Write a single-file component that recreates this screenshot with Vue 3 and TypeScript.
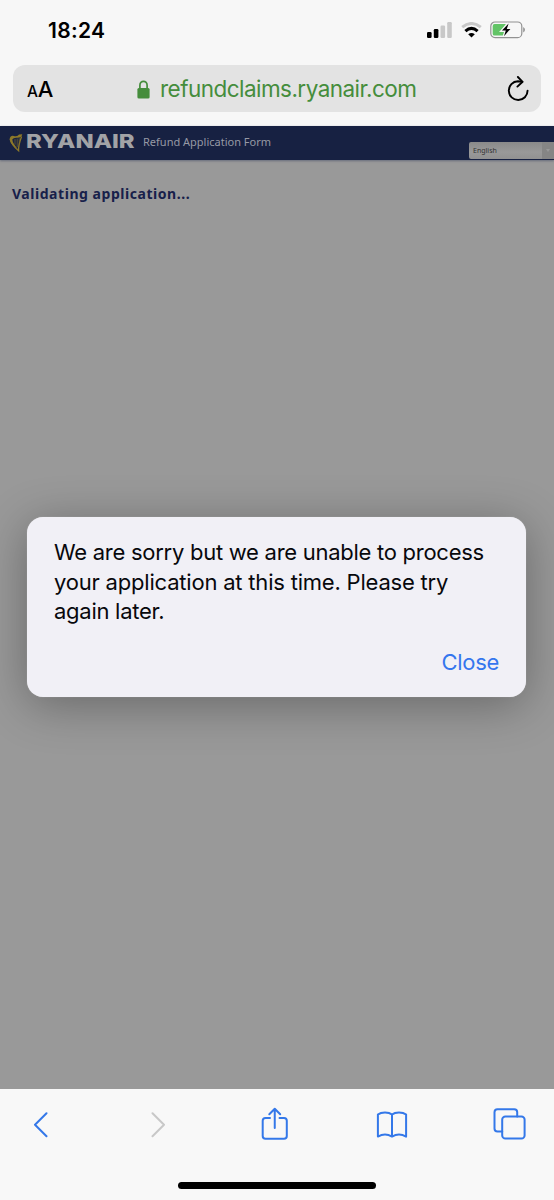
<script setup lang="ts">
const host = 'refundclaims.ryanair.com'
const lines: string[] = [
  'We are sorry but we are unable to process',
  'your application at this time. Please try',
  'again later.',
]
</script>

<template>
  <div class="phone">
    <header class="chrome">
      <div class="status">
        <span class="time">18:24</span>
        <div class="indicators">
          <svg class="signal" width="25" height="16" viewBox="0 0 25 16">
            <rect x="0" y="10" width="4.6" height="6" rx="1.2" fill="#000" />
            <rect x="6.8" y="7" width="4.6" height="9" rx="1.2" fill="#000" />
            <rect x="13.5" y="3.6" width="4.6" height="12.4" rx="1.2" fill="#c8c8c8" />
            <rect x="20.2" y="0" width="4.6" height="16" rx="1.2" fill="#c8c8c8" />
          </svg>
          <svg class="wifi" width="21" height="16" viewBox="0 0 21 16">
            <path d="M1.2 5.2Q10.5-2.2 19.8 5.2" fill="none" stroke="#c8c8c8" stroke-width="3" />
            <path d="M4.4 9.1Q10.5 3.8 16.6 9.1" fill="none" stroke="#000" stroke-width="3.1" />
            <path d="M7.2 12.2Q10.5 9.6 13.8 12.2L10.5 15.6Z" fill="#000" />
          </svg>
          <svg class="battery" width="35" height="18" viewBox="0 0 35 18">
            <rect x=".8" y="1" width="31" height="15.6" rx="4.2" fill="none" stroke="#929292" stroke-width="1.2" />
            <path d="M4.6 3H16L11 9.5H15L13.4 14.6H4.6Q2.7 14.6 2.7 12.7V4.9Q2.7 3 4.6 3Z" fill="#62c466" />
            <path d="M33.2 6Q35 7 35 8.8T33.2 11.6Z" fill="#929292" />
            <path d="M18.6 2.5L12 9.6H15.8L14 15.2L20.4 7.9H16.8Z" fill="#000" stroke="#f7f7f7" stroke-width="2.6" paint-order="stroke" />
          </svg>
        </div>
      </div>
      <div class="address">
        <span class="reader"><small>A</small>A</span>
        <svg class="lock" width="13" height="19" viewBox="0 0 13 19">
          <path d="M2.9 9V5.2a3.6 3.9 0 0 1 7.2 0V9" fill="none" stroke="#458d3c" stroke-width="1.7" />
          <rect x=".4" y="8" width="12.2" height="10.4" rx="1.5" fill="#458d3c" />
        </svg>
        <span class="host">{{ host }}</span>
        <svg class="reload" width="24" height="26" viewBox="0 0 24 26" fill="none" stroke="#000" stroke-width="1.9" stroke-linecap="round" stroke-linejoin="round">
          <path d="M17.2 5.9Q15.5 5.2 12.9 5.2A9.4 9.4 0 1 0 22.6 14.6" />
          <path d="M12.9 1L17.6 5.8L12.4 10.6" />
        </svg>
      </div>
    </header>

    <main class="page">
      <div class="banner">
        <svg class="harp" width="14" height="20" viewBox="0 0 14 20">
          <path d="M1.4 6.5Q2.4 12 9.6 17.8Q9.2 12.5 12.6 3.4" fill="none" stroke="#8d7929" stroke-width="1.3" />
          <path d="M.6 6.8Q.8 2.2 4.8 2.9Q8.6 3.8 10 1.6L13.3 1.2Q12.6 4.8 8.4 4.8Q4.4 4.4 3.3 6.6Q3.6 10.6 9.2 16.4Q2.4 12.8.6 6.8Z" fill="#8d7929" />
          <path d="M6 6V11.7M8.2 5.6V14M10.2 5.2V12" stroke="#77672d" stroke-width=".7" />
        </svg>
        <span class="brand">RYANAIR</span>
        <span class="form-name">Refund Application Form</span>
        <div class="language"><span>English</span><i><b></b></i></div>
      </div>
      <h1>Validating application...</h1>
      <section class="dialog" role="alertdialog">
        <p><span v-for="line in lines" :key="line">{{ line }}</span></p>
        <button type="button">Close</button>
      </section>
    </main>

    <footer class="toolbar">
      <nav>
        <svg width="16" height="26" viewBox="0 0 16 26"><path d="M13.5 1.3L2 12.8L13.5 24.3" /></svg>
        <svg class="disabled" width="16" height="26" viewBox="0 0 16 26"><path d="M2.5 1.3L14 12.8L2.5 24.3" /></svg>
        <svg width="28" height="34" viewBox="0 0 28 34"><path d="M9 11H4.5Q1.7 11 1.7 13.8V29Q1.7 31.8 4.5 31.8H23Q25.8 31.8 25.8 29V13.8Q25.8 11 23 11H18.5M13.75 21V2M8.3 7.2L13.75 1.8L19.2 7.2" /></svg>
        <svg width="32" height="28" viewBox="0 0 32 28"><path d="M16 3.6Q13.5 1.4 9 1.4T1.9 3.6V25.6Q5.5 23.6 9 23.6T16 25.6Q19.5 23.6 23 23.6T30.1 25.6V3.6Q27.5 1.4 23 1.4T16 3.6ZM16 3.6V25.6" /></svg>
        <svg width="33" height="32" viewBox="0 0 33 32"><rect x="9.2" y="8.4" width="22.4" height="22.2" rx="3.2" /><path d="M9.2 23.5H4.5Q1.5 23.5 1.5 20.5V4.3Q1.5 1.3 4.5 1.3H21.2Q24.2 1.3 24.2 4.3V8.4" /></svg>
      </nav>
      <div class="home"></div>
    </footer>
  </div>
</template>

<style>
body {
  margin: 0;
}
</style>

<style scoped>
.phone {
  width: 554px;
  height: 1200px;
  display: flex;
  flex-direction: column;
  overflow: hidden;
  background: #f8f8f8;
  font-family: Inter, "Liberation Sans", sans-serif;
  color: #000;
}
.chrome {
  height: 126px;
  box-sizing: border-box;
  background: #f7f7f7;
}
.status {
  height: 65px;
  box-sizing: border-box;
  padding: 18px 29px 0 48px;
  display: flex;
  justify-content: space-between;
}
.time {
  font-size: 21px;
  line-height: 26px;
  font-weight: 600;
  letter-spacing: 0.3px;
}
.indicators {
  display: flex;
  align-items: flex-start;
  padding-top: 4px;
}
.wifi {
  margin-left: 9px;
}
.battery {
  margin-left: 8px;
  margin-top: -1px;
}
.address {
  height: 47px;
  margin: 0 13px;
  padding: 0 12px 0 14px;
  box-sizing: border-box;
  display: flex;
  align-items: center;
  background: #e3e3e3;
  border-radius: 12px;
}
.reader {
  width: 109.5px;
  padding-top: 4px;
  font-size: 22px;
  line-height: 28px;
  font-weight: 450;
  letter-spacing: -0.2px;
}
.reader small {
  font-size: 15.5px;
  font-weight: 500;
}
.lock {
  margin-top: 1px;
}
.host {
  margin-left: 10.5px;
  color: #458d3c;
  font-size: 22.5px;
  line-height: 28px;
  letter-spacing: -0.54px;
}
.reload {
  margin-left: auto;
}
.page {
  height: 963px;
  background: #999;
}
.banner {
  height: 34px;
  display: flex;
  background: #172142;
  box-shadow: 0 1px 2px #666b7b;
}
.harp {
  margin: 7px 3px 0 9px;
  flex: none;
}
.brand {
  width: 117px;
  flex: none;
  font-size: 19px;
  line-height: 32px;
  font-weight: 800;
  color: #a2a3a6;
  transform: scaleX(1.255);
  transform-origin: left;
}
.form-name {
  font-family: "Noto Sans", sans-serif;
  font-size: 11px;
  line-height: 32px;
  color: #9699a5;
  white-space: nowrap;
}
.language {
  width: 85px;
  height: 17px;
  margin: 16px 0 0 auto;
  display: flex;
  flex: none;
  justify-content: space-between;
  background: linear-gradient(#8a8a8a, #999 60%, #919191);
  border-radius: 2px 0 0 2px;
  font-family: "Noto Sans", sans-serif;
  font-size: 7px;
  line-height: 17px;
  color: #333;
}
.language span {
  padding-left: 4px;
}
.language i {
  width: 12px;
  display: flex;
  align-items: center;
  justify-content: center;
  background: #858585;
}
.language b {
  border: 2px solid transparent;
  border-top: 3px solid #999;
  border-bottom: 0;
}
h1 {
  margin: 24px 0 0 12px;
  font-family: "Noto Sans", sans-serif;
  font-size: 14px;
  line-height: 20px;
  font-weight: 700;
  letter-spacing: 0.54px;
  color: #17204a;
}
.dialog {
  width: 499px;
  height: 180px;
  margin: 313px 0 0 27px;
  padding: 21px 27px 0;
  box-sizing: border-box;
  display: flex;
  flex-direction: column;
  background: #f1f0f6;
  border-radius: 16px;
  box-shadow: 0 8px 48px rgba(0, 0, 0, 0.32), 0 0 1px #d8d8d8;
}
p {
  margin: 0;
  font-size: 22px;
  line-height: 29.5px;
  letter-spacing: -0.27px;
  color: #08080c;
}
p span {
  display: block;
  white-space: nowrap;
}
p span:nth-child(2) {
  letter-spacing: -0.2px;
}
button {
  align-self: flex-end;
  margin-top: 21px;
  padding: 0;
  border: 0;
  background: none;
  font: inherit;
  font-size: 22px;
  line-height: 28px;
  letter-spacing: -0.3px;
  color: #3576ee;
}
.toolbar {
  height: 111px;
  background: #f8f8f8;
}
nav {
  height: 93px;
  margin: 0 -13.5px 0 -17.5px;
  padding-top: 18px;
  box-sizing: border-box;
  display: grid;
  grid-template-columns: repeat(5, 1fr);
  justify-items: center;
  align-items: start;
}
nav svg {
  fill: none;
  stroke: #3478e9;
  stroke-width: 2;
  stroke-linecap: round;
  stroke-linejoin: round;
}
nav svg:nth-child(-n+2) {
  margin-top: 5px;
}
nav svg:nth-child(4) {
  margin-top: 4px;
}
nav svg:nth-child(5) {
  margin-top: 1px;
}
nav .disabled {
  stroke: #c8c8c8;
}
.home {
  width: 198px;
  height: 7px;
  margin: 0 auto;
  border-radius: 4px;
  background: #000;
}
</style>
